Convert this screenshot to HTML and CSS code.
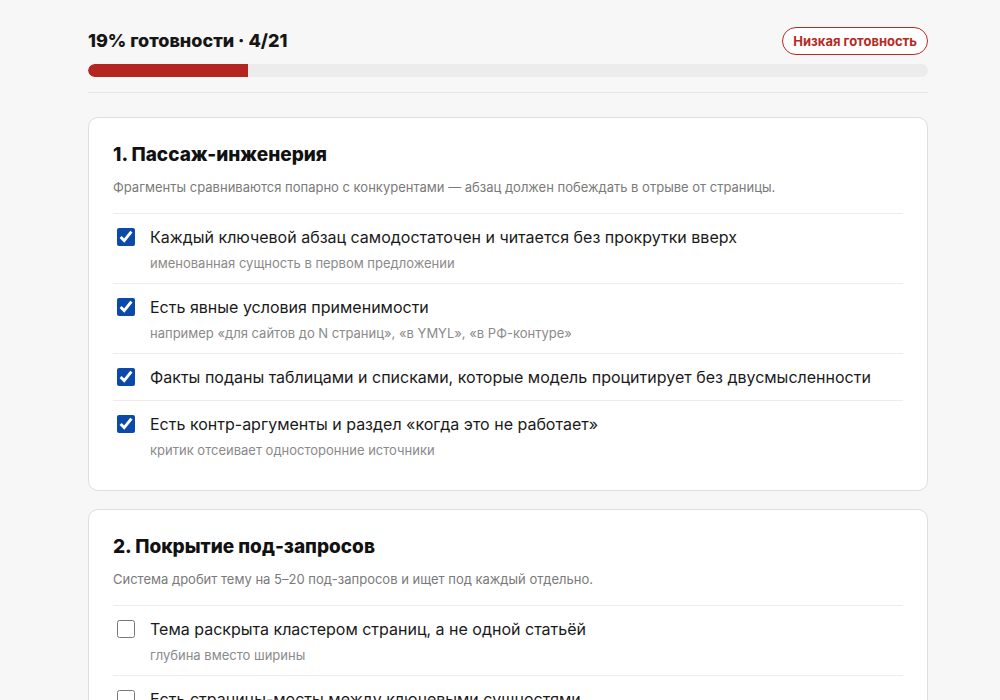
FILE: index.html
```html
<!DOCTYPE html>
<html lang="ru">
<head>
    <meta charset="UTF-8">
    <meta name="viewport" content="width=device-width, initial-scale=1.0">
    <title>Чек-лист готовности</title>
    <link rel="stylesheet" href="styles.css">
</head>
<body>

<div class="page">
    <div class="summary">
        <div class="summary-top">
            <h2 class="summary-title">19% готовности · 4/21</h2>
            <span class="badge">Низкая готовность</span>
        </div>
        <div class="progress"><div class="progress-fill" style="width: 19%"></div></div>
    </div>

    <section class="card">
        <h3 class="card-title">1. Пассаж-инженерия</h3>
        <p class="card-desc">Фрагменты сравниваются попарно с конкурентами — абзац должен побеждать в отрыве от страницы.</p>
        <ul class="checklist">
            <li class="item">
                <input type="checkbox" checked>
                <div class="item-body">
                    <div class="item-text">Каждый ключевой абзац самодостаточен и читается без прокрутки вверх</div>
                    <div class="item-hint">именованная сущность в первом предложении</div>
                </div>
            </li>
            <li class="item">
                <input type="checkbox" checked>
                <div class="item-body">
                    <div class="item-text">Есть явные условия применимости</div>
                    <div class="item-hint">например «для сайтов до N страниц», «в YMYL», «в РФ-контуре»</div>
                </div>
            </li>
            <li class="item">
                <input type="checkbox" checked>
                <div class="item-body">
                    <div class="item-text">Факты поданы таблицами и списками, которые модель процитирует без двусмысленности</div>
                </div>
            </li>
            <li class="item">
                <input type="checkbox" checked>
                <div class="item-body">
                    <div class="item-text">Есть контр-аргументы и раздел «когда это не работает»</div>
                    <div class="item-hint">критик отсеивает односторонние источники</div>
                </div>
            </li>
        </ul>
    </section>

    <section class="card">
        <h3 class="card-title">2. Покрытие под-запросов</h3>
        <p class="card-desc">Система дробит тему на 5–20 под-запросов и ищет под каждый отдельно.</p>
        <ul class="checklist">
            <li class="item">
                <input type="checkbox">
                <div class="item-body">
                    <div class="item-text">Тема раскрыта кластером страниц, а не одной статьёй</div>
                    <div class="item-hint">глубина вместо ширины</div>
                </div>
            </li>
            <li class="item">
                <input type="checkbox">
                <div class="item-body">
                    <div class="item-text">Есть страницы-мосты между ключевыми сущностями</div>
                    <div class="item-hint">связи между темами видны и модели, и читателю</div>
                </div>
            </li>
        </ul>
    </section>
</div>

</body>
</html>
```

FILE: styles.css
```css
body {
    font-family: Inter, "Noto Sans", sans-serif;
    margin: 0;
    padding: 0;
    background-color: #f7f7f7;
    color: #1a1a1a;
}
.page {
    width: 840px;
    padding: 27px 0 40px 88px;
}
.summary {
    padding-bottom: 15px;
    border-bottom: 1px solid #e6e6e6;
    margin-bottom: 24px;
}
.summary-top {
    display: flex;
    justify-content: space-between;
    align-items: center;
    margin-bottom: 9px;
}
.summary-title {
    margin: 0;
    font-size: 18px;
    font-weight: 800;
    color: #161616;
    line-height: 28px;
}
.badge {
    display: inline-block;
    height: 26px;
    line-height: 26px;
    padding: 0 10px;
    border: 1px solid #b52a24;
    border-radius: 14px;
    color: #b52a24;
    font-size: 13px;
    font-weight: 700;
    background-color: #fff;
}
.progress {
    height: 13px;
    background-color: #ececec;
    border-radius: 7px;
    overflow: hidden;
}
.progress-fill {
    height: 100%;
    background-color: #b52520;
    border-radius: 7px 0 0 7px;
}
.card {
    background-color: #fff;
    border: 1px solid #dedede;
    border-radius: 10px;
    padding: 24px 24px 20px;
    margin-bottom: 18px;
}
.card-title {
    margin: 0;
    font-size: 19px;
    font-weight: 800;
    line-height: 26px;
    color: #111;
}
.card-desc {
    margin: 10px 0 17px;
    font-size: 13px;
    line-height: 18px;
    color: #7a7a7a;
}
.checklist {
    list-style: none;
    margin: 0;
    padding: 0;
}
.item {
    display: flex;
    align-items: flex-start;
    gap: 15px;
    padding: 13px 0 11px;
    border-top: 1px solid #ececec;
}
.item input[type="checkbox"] {
    width: 18px;
    height: 18px;
    margin: 1px 0 3px 4px;
    accent-color: #0b4aa8;
    flex-shrink: 0;
}
.item-text {
    font-size: 16px;
    line-height: 20px;
    color: #1a1a1a;
}
.item-hint {
    margin-top: 7px;
    font-size: 13px;
    line-height: 18px;
    color: #8a8a8a;
}
```
